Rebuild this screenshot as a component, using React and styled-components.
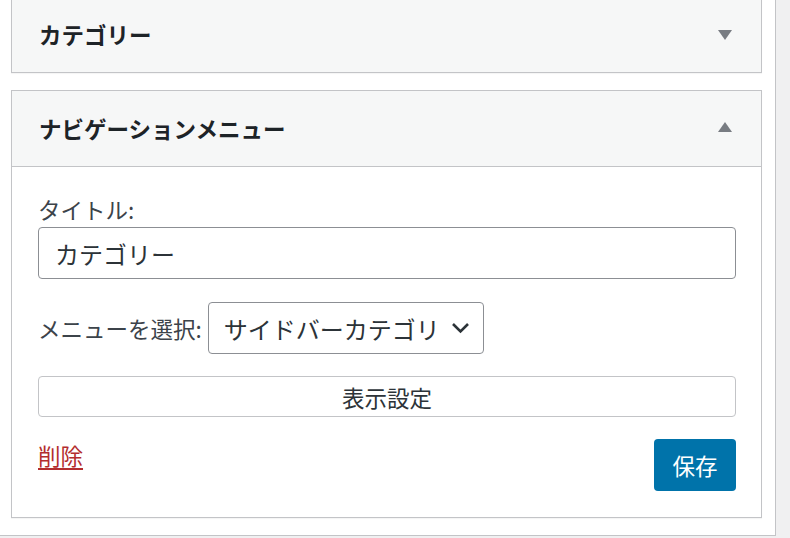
import React from 'react';
import styled, { createGlobalStyle } from 'styled-components';

const GlobalStyle = createGlobalStyle`
  html, body {
    margin: 0;
    padding: 0;
    background: #f0f0f1;
  }
  body {
    font-family: "Noto Sans CJK JP", "Noto Sans", sans-serif;
    color: #1d2327;
  }
`;

const Sidebar = styled.div`
  box-sizing: border-box;
  width: 776px;
  margin-top: -4px;
  padding: 0 13px 17px 11px;
  background: #fff;
  border-right: 1px solid #c3c4c7;
  border-bottom: 1px solid #c3c4c7;
  display: flex;
  flex-direction: column;
  gap: 17px;
`;

const Widget = styled.div`
  border: 1px solid #c3c4c7;
  background: #fff;
  box-shadow: 0 1px 1px rgba(0, 0, 0, 0.04);
`;

const WidgetTop = styled.div`
  height: 75px;
  display: flex;
  align-items: center;
  justify-content: space-between;
  padding: 0 29px 0 27px;
  background: #f6f7f7;
  border-bottom: ${(p) => (p.open ? '1px solid #c3c4c7' : 'none')};
`;

const WidgetTitle = styled.h3`
  margin: -2px 0 0;
  font-size: 22.5px;
  font-weight: 700;
  color: #1d2327;
`;

const Toggle = styled.svg`
  width: 14px;
  height: 10px;
  fill: #787c82;
  margin-top: ${(p) => (p.open ? '-4px' : '0')};
`;

const WidgetInside = styled.div`
  padding: 27px 25px 26px 26px;
  display: flex;
  flex-direction: column;
`;

const Label = styled.label`
  display: block;
  font-size: 22.5px;
  line-height: 31px;
  color: #3c434a;
`;

const TextInput = styled.input`
  box-sizing: border-box;
  margin-top: 2px;
  width: 100%;
  height: 52px;
  padding: 0 16px;
  border: 1px solid #8c8f94;
  border-radius: 4px;
  font-family: inherit;
  font-size: 24px;
  color: #2c3338;
  background: #fff;
`;

const SelectRow = styled.div`
  margin-top: 23px;
  display: flex;
  align-items: center;
  gap: 6px;
`;

const SelectBox = styled.div`
  box-sizing: border-box;
  height: 52px;
  width: 276px;
  display: flex;
  align-items: center;
  justify-content: space-between;
  padding: 0 13px 0 15px;
  border: 1px solid #8c8f94;
  border-radius: 4px;
  font-size: 24px;
  color: #2c3338;
  white-space: nowrap;
  overflow: hidden;
`;

const Chevron = styled.svg`
  width: 19px;
  height: 12px;
  flex-shrink: 0;
  margin-left: 10px;
`;

const SettingsButton = styled.button`
  box-sizing: border-box;
  margin-top: 22px;
  width: 100%;
  height: 41px;
  border: 1px solid #c3c4c7;
  border-radius: 4px;
  background: #fff;
  font-family: inherit;
  font-size: 22.5px;
  color: #2c3338;
`;

const Actions = styled.div`
  margin-top: 22px;
  display: flex;
  justify-content: space-between;
  align-items: flex-start;
`;

const DeleteLink = styled.a`
  margin-top: 1px;
  font-size: 22.5px;
  line-height: 30px;
  color: #b32d2e;
  text-decoration: underline;
  text-underline-offset: 3px;
`;

const SaveButton = styled.button`
  box-sizing: border-box;
  height: 52px;
  width: 82px;
  border: none;
  border-radius: 4px;
  background: #0073aa;
  color: #fff;
  font-family: inherit;
  font-size: 22.5px;
`;

const Arrow = ({ open }) => (
  <Toggle open={open} viewBox="0 0 14 10">
    {open ? <polygon points="7,0 14,10 0,10" /> : <polygon points="0,0 14,0 7,10" />}
  </Toggle>
);

export default function App() {
  return (
    <>
      <GlobalStyle />
      <Sidebar>
        <Widget>
          <WidgetTop>
            <WidgetTitle>カテゴリー</WidgetTitle>
            <Arrow />
          </WidgetTop>
        </Widget>
        <Widget>
          <WidgetTop open>
            <WidgetTitle>ナビゲーションメニュー</WidgetTitle>
            <Arrow open />
          </WidgetTop>
          <WidgetInside>
            <Label>タイトル:</Label>
            <TextInput defaultValue="カテゴリー" />
            <SelectRow>
              <Label as="span">メニューを選択:</Label>
              <SelectBox>
                <span>サイドバーカテゴリ</span>
                <Chevron viewBox="0 0 19 12">
                  <polyline points="2,2 9.5,9.5 17,2" fill="none" stroke="#2c3338" strokeWidth="2.6" />
                </Chevron>
              </SelectBox>
            </SelectRow>
            <SettingsButton>表示設定</SettingsButton>
            <Actions>
              <DeleteLink href="#">削除</DeleteLink>
              <SaveButton>保存</SaveButton>
            </Actions>
          </WidgetInside>
        </Widget>
      </Sidebar>
    </>
  );
}
